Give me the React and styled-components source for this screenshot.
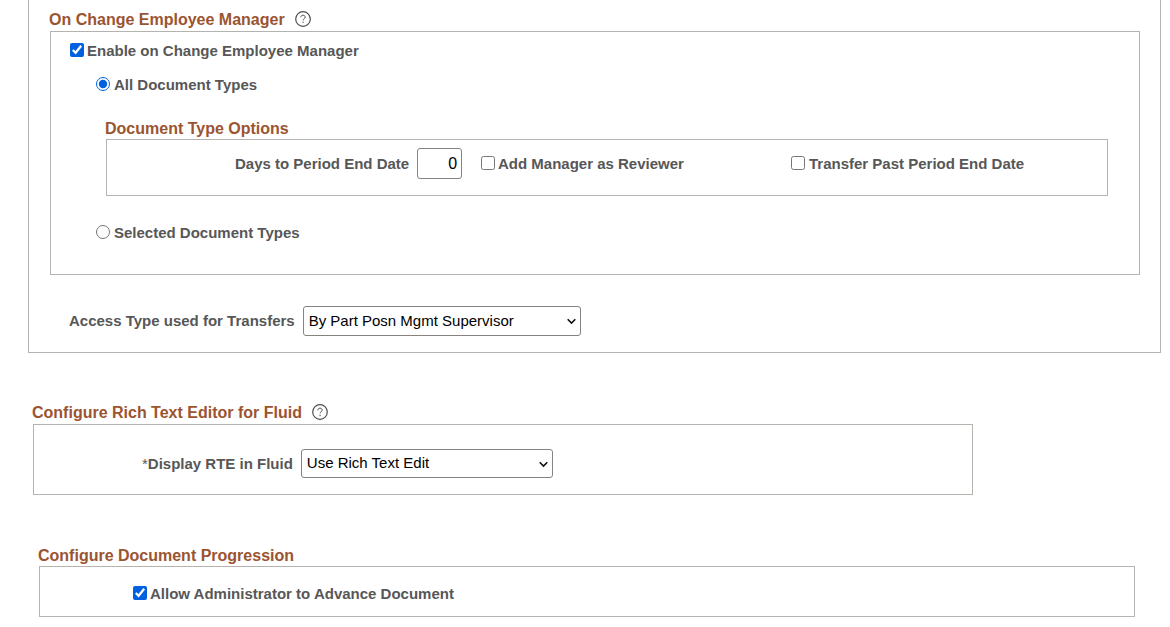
import React, { useId, useState } from 'react';
import styled, { createGlobalStyle } from 'styled-components';

const GlobalStyle = createGlobalStyle`
    * {
        box-sizing: border-box;
    }
    body {
        margin: 0;
        background-color: #fff;
        color: #575757;
        font-family: "Liberation Sans", Arial, sans-serif;
        font-size: 15px;
        line-height: 20px;
    }
`;

const Page = styled.main`
    padding-bottom: 10px;
`;

const OuterPanel = styled.section`
    margin: 0 9px 0 28px;
    padding: 7px 20px 16px 21px;
    border: 1px solid #b5b3ae;
    border-top: none;
`;

const Group = styled.section`
    margin: ${({ $margin }) => $margin || '0'};
    max-width: ${({ $maxWidth }) => $maxWidth || 'none'};
`;

const Heading = styled.h2`
    display: flex;
    align-items: center;
    gap: 10px;
    height: ${({ $withHelp }) => $withHelp ? '24px' : '22px'};
    margin: 0 0 0 -1px;
    padding-top: 2px;
    color: #9b5430;
    font-size: 16px;
    font-weight: bold;
`;

const Box = styled.div`
    border: 1px solid #b5b3ae;
    padding: ${({ $padding }) => $padding};
`;

const HelpButton = styled.button`
    display: flex;
    margin-bottom: 2px;
    padding: 0;
    border: none;
    background: none;
    color: #4f4f4f;
    cursor: pointer;
`;

const Row = styled.div`
    display: flex;
    align-items: center;
    gap: ${({ $gap }) => $gap || '0'};
    margin: ${({ $margin }) => $margin || '0'};
`;

const OptionsRow = styled.div`
    display: grid;
    grid-template-columns: 246px 310px 1fr;
    align-items: center;
`;

const Option = styled.label`
    display: flex;
    align-items: center;
    gap: ${({ $gap }) => $gap || '3px'};
    font-weight: bold;
    white-space: nowrap;
`;

const Tick = styled.input`
    flex: none;
    width: 14px;
    height: 14px;
    margin: 0 0 2px;
    accent-color: #0060df;
`;

const FieldLabel = styled.label`
    flex: none;
    font-weight: bold;
    text-align: right;
    white-space: nowrap;
`;

const Required = styled.span`
    font-weight: normal;
`;

const DaysInput = styled.input`
    width: 45px;
    height: 31px;
    padding: 0 4px;
    border: 1px solid #85837e;
    border-radius: 3px;
    background-color: #fff;
    color: #000;
    font: inherit;
    font-size: 16px;
    text-align: right;
`;

const SelectWrap = styled.div`
    position: relative;
    width: ${({ $width }) => $width};
`;

const Select = styled.select`
    appearance: none;
    display: block;
    width: 100%;
    height: ${({ $height }) => $height};
    padding: 0 24px 1px 5px;
    border: 1px solid #85837e;
    border-radius: 3px;
    background-color: #fff;
    color: #000;
    font: inherit;
`;

const Arrow = styled.svg`
    position: absolute;
    top: 50%;
    right: 4px;
    margin-top: -3px;
    pointer-events: none;
`;

const Help = () => (
    <HelpButton type="button" aria-label="Help">
        <svg width="16" height="16" viewBox="0 0 16 16" fill="none" stroke="currentColor">
            <circle cx="8" cy="8" r="7.3" strokeWidth="1.2"/>
            <path d="M5.8 6.3c0-1.3.9-2.1 2.2-2.1s2.2.8 2.2 1.9c0 1.6-2.1 1.6-2.1 3.3" strokeWidth="1"/>
            <path d="M8.1 10.7v1.2" strokeWidth="1.1"/>
        </svg>
    </HelpButton>
);

const Check = ({ label, checked = false, gap }) => {
    const [value, setValue] = useState(checked);

    return (
        <Option $gap={gap}>
            <Tick type="checkbox" checked={value} onChange={(e) => setValue(e.target.checked)}/>
            {label}
        </Option>
    )
};

const Radio = ({ label, value, current, onSelect }) => (
    <Option $gap="4px">
        <Tick type="radio" name="docTypes" checked={value === current} onChange={() => onSelect(value)}/>
        {label}
    </Option>
);

const SelectField = ({ label, required, width, height, option, margin }) => {
    const id = useId();

    return (
        <Row $gap="8px" $margin={margin}>
            <FieldLabel htmlFor={id}>{required && <Required>*</Required>}{label}</FieldLabel>
            <SelectWrap $width={width}>
                <Select id={id} $height={height}>
                    <option>{option}</option>
                </Select>
                <Arrow width="11" height="7" viewBox="0 0 11 7" fill="none" stroke="#111" strokeWidth="1.6">
                    <path d="M1.7 1.3l3.8 3.8 3.8-3.8"/>
                </Arrow>
            </SelectWrap>
        </Row>
    )
};

export default function App() {
    const [docTypes, setDocTypes] = useState('all');
    const [days, setDays] = useState('0');

    return (
        <Page>
            <GlobalStyle/>
            <OuterPanel>
                <Group>
                    <Heading $withHelp>On Change Employee Manager <Help/></Heading>
                    <Box $padding="9px 31px 31px 19px">
                        <Check label="Enable on Change Employee Manager" checked/>
                        <Row $margin="14px 0 0 26px">
                            <Radio label="All Document Types" value="all" current={docTypes} onSelect={setDocTypes}/>
                        </Row>
                        <Group $margin="22px 0 0 36px">
                            <Heading>Document Type Options</Heading>
                            <Box $padding="8px 0 16px 128px">
                                <OptionsRow>
                                    <Row $gap="8px">
                                        <FieldLabel htmlFor="days">Days to Period End Date</FieldLabel>
                                        <DaysInput id="days" value={days} onChange={(e) => setDays(e.target.value)}/>
                                    </Row>
                                    <Check label="Add Manager as Reviewer"/>
                                    <Check label="Transfer Past Period End Date" gap="4px"/>
                                </OptionsRow>
                            </Box>
                        </Group>
                        <Row $margin="27px 0 0 26px">
                            <Radio label="Selected Document Types" value="selected" current={docTypes} onSelect={setDocTypes}/>
                        </Row>
                    </Box>
                </Group>
                <SelectField
                    label="Access Type used for Transfers"
                    width="278px"
                    height="30px"
                    option="By Part Posn Mgmt Supervisor"
                    margin="31px 0 0 19px"
                />
            </OuterPanel>

            <Group $margin="47px 20px 0 33px" $maxWidth="940px">
                <Heading $withHelp>Configure Rich Text Editor for Fluid <Help/></Heading>
                <Box $padding="24px 0 16px 108px">
                    <SelectField
                        label="Display RTE in Fluid"
                        required
                        width="252px"
                        height="29px"
                        option="Use Rich Text Edit"
                    />
                </Box>
            </Group>

            <Group $margin="49px 35px 0 39px">
                <Heading>Configure Document Progression</Heading>
                <Box $padding="17px 0 12px 93px">
                    <Check label="Allow Administrator to Advance Document" checked/>
                </Box>
            </Group>
        </Page>
    )
}
